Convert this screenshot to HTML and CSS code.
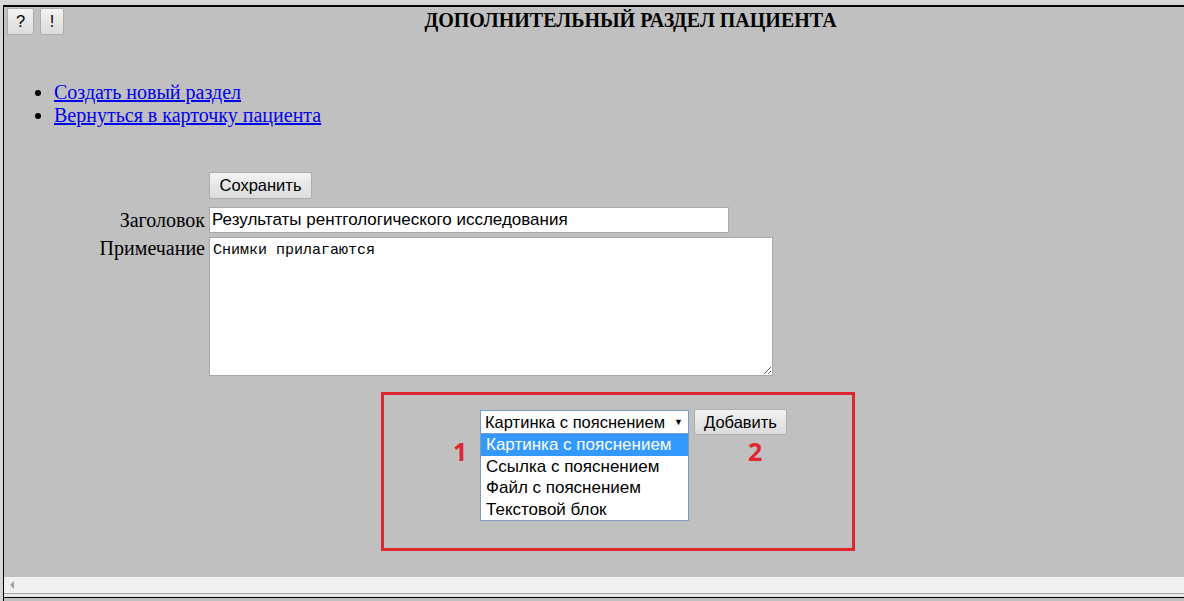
FILE: index.html
```html
<!DOCTYPE html>
<html lang="ru">
<head>
<meta charset="utf-8">
<title>Дополнительный раздел пациента</title>
<link rel="stylesheet" href="styles.css">
</head>
<body>
<div class="window">
  <div class="content">
    <div class="header">
      <button class="btn btn-q">?</button>
      <button class="btn btn-e">!</button>
      <h1 class="title">ДОПОЛНИТЕЛЬНЫЙ РАЗДЕЛ ПАЦИЕНТА</h1>
    </div>
    <ul class="links">
      <li><a href="#">Создать новый раздел</a></li>
      <li><a href="#">Вернуться в карточку пациента</a></li>
    </ul>
    <div class="form">
      <div class="label"></div>
      <div><button class="btn btn-save">Сохранить</button></div>
      <div class="label label-mid">Заголовок</div>
      <div><input class="field-input" type="text" value="Результаты рентгологического исследования"></div>
      <div class="label label-top">Примечание</div>
      <div><textarea class="field-area">Снимки прилагаются</textarea></div>
    </div>
    <div class="annot">
      <div class="addrow">
        <div class="select-wrap">
          <div class="select">
            <span>Картинка с пояснением</span>
            <span class="arrow">▼</span>
          </div>
          <ul class="dropdown">
            <li class="opt opt-active">Картинка с пояснением</li>
            <li class="opt">Ссылка с пояснением</li>
            <li class="opt">Файл с пояснением</li>
            <li class="opt">Текстовой блок</li>
          </ul>
        </div>
        <button class="btn btn-add">Добавить</button>
      </div>
      <span class="mark mark-1">1</span>
      <span class="mark mark-2">2</span>
    </div>
  </div>
  <div class="hscroll"><span class="harrow"></span></div>
  <div class="bottom-edge"></div>
</div>
</body>
</html>
```

FILE: styles.css
```css
html, body {
  margin: 0;
  padding: 0;
}
body {
  background: #d6d6d6;
  width: 1184px;
  height: 601px;
  overflow: hidden;
}
.window {
  margin: 5px 0 0 3px;
  border-top: 2px solid #000;
  border-left: 1px solid #000;
  background: #c0c0c0;
  display: flex;
  flex-direction: column;
  height: 594px;
}
.content {
  height: 570px;
  position: relative;
  font-family: "Liberation Serif", "Times New Roman", serif;
  font-size: 20px;
  color: #000;
}
.header {
  display: flex;
  align-items: flex-start;
  padding: 1px 0 0 3px;
  gap: 6px;
}
.btn {
  font-family: "Liberation Sans", Arial, sans-serif;
  font-size: 16.5px;
  color: #000;
  background: linear-gradient(#f4f4f4, #e6e6e6 50%, #dcdcdc);
  border: 1px solid #adadad;
  border-radius: 2px;
  padding: 0;
  margin: 0;
  height: 27px;
  line-height: 25px;
}
.btn-q { width: 27px; }
.btn-e { width: 24px; }
.title {
  flex: 1;
  margin: 1px 0 0;
  padding-left: 7px;
  text-align: center;
  font-size: 20px;
  font-weight: bold;
  line-height: 23px;
}
.links {
  margin: 46px 0 0;
  padding-left: 50px;
  line-height: 23px;
}
.links a {
  color: #0000ee;
  text-decoration: underline;
}
.form {
  display: grid;
  grid-template-columns: 201px auto;
  column-gap: 4px;
  margin-top: 45px;
}
.form > div:nth-child(3), .form > div:nth-child(4) { margin-top: 8px; }
.form > div:nth-child(5), .form > div:nth-child(6) { margin-top: 4px; }
.label {
  text-align: right;
  line-height: 23px;
}
.label-mid { align-self: center; }
.label-top { padding-top: 0; }
.btn-save {
  width: 103px;
  height: 27px;
  display: block;
}
.field-input {
  display: block;
  box-sizing: border-box;
  width: 520px;
  height: 26px;
  margin: 0;
  border: 1px solid #a9a9a9;
  background: #fff;
  padding: 0 2px;
  font-family: "Liberation Sans", Arial, sans-serif;
  font-size: 17px;
  color: #000;
}
.field-area {
  display: block;
  box-sizing: border-box;
  width: 564px;
  height: 139px;
  margin: 0;
  border: 1px solid #a9a9a9;
  background: #fff;
  padding: 4px 3px;
  font-family: "Liberation Mono", "DejaVu Sans Mono", monospace;
  font-size: 15px;
  color: #000;
  resize: both;
}
.annot {
  position: relative;
  box-sizing: border-box;
  width: 474px;
  height: 159px;
  margin: 16px 0 0 377px;
  border: 3px solid #e0262e;
}
.addrow {
  display: flex;
  align-items: flex-start;
  gap: 5px;
  padding: 14px 0 0 96px;
}
.select-wrap {
  position: relative;
  margin-top: 1px;
}
.select {
  box-sizing: border-box;
  width: 209px;
  height: 24px;
  border: 1px solid #7a9bd0;
  background: #fff;
  display: flex;
  align-items: center;
  justify-content: space-between;
  padding: 0 5px 0 4px;
  font-family: "Liberation Sans", Arial, sans-serif;
  font-size: 16.5px;
}
.arrow {
  font-size: 9px;
}
.dropdown {
  position: absolute;
  left: 0;
  top: 24px;
  box-sizing: border-box;
  width: 209px;
  margin: 0;
  padding: 0;
  list-style: none;
  background: #fff;
  border: 1px solid #7f9db9;
  border-top: none;
  font-family: "Liberation Sans", Arial, sans-serif;
  font-size: 17px;
  z-index: 2;
}
.opt {
  height: 21.5px;
  line-height: 21px;
  padding-left: 5px;
  white-space: nowrap;
}
.opt-active {
  background: #3399ff;
  color: #fff;
}
.btn-add {
  width: 93px;
  height: 26px;
}
.mark {
  position: absolute;
  font-family: "Open Sans", "Liberation Sans", sans-serif;
  font-weight: bold;
  font-size: 25px;
  color: #e0262e;
  line-height: 28px;
}
.mark-1 { left: 69px; top: 42px; }
.mark-2 { left: 364px; top: 42px; }
.hscroll {
  height: 16px;
  background: #f0f0f0;
  position: relative;
  border-bottom: 1px solid #a8a8a8;
}
.harrow {
  position: absolute;
  left: 6px;
  top: 4px;
  width: 0;
  height: 0;
  border-top: 4px solid transparent;
  border-bottom: 4px solid transparent;
  border-right: 4px solid #a0a0a0;
}
.bottom-edge {
  height: 3px;
  background: #e8e8e8;
  border-bottom: 1px solid #000;
}
```
